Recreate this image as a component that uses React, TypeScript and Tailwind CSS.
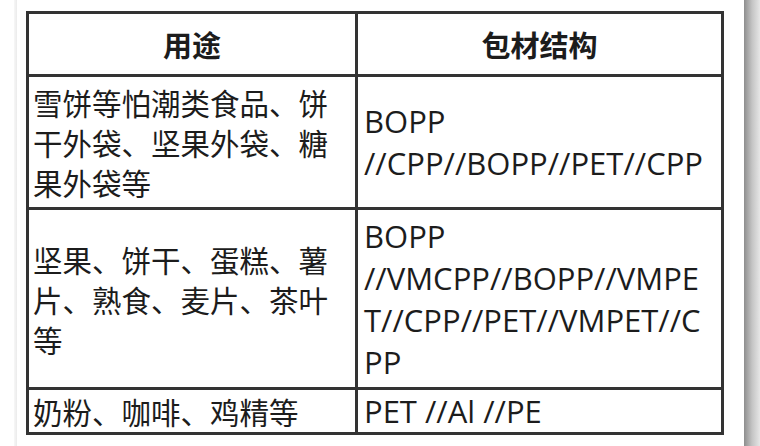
const cjk = "font-['Noto_Sans_CJK_SC','Noto_Sans',sans-serif]";
const latin = "font-['Open_Sans','Noto_Sans_CJK_SC',sans-serif]";

const rows = [
  {
    use: ["雪饼等怕潮类食品、饼", "干外袋、坚果外袋、糖", "果外袋等"],
    pack: ["BOPP", "//CPP//BOPP//PET//CPP"],
    h: "h-[133px]",
  },
  {
    use: ["坚果、饼干、蛋糕、薯", "片、熟食、麦片、茶叶", "等"],
    pack: ["BOPP", "//VMCPP//BOPP//VMPE", "T//CPP//PET//VMPET//C", "PP"],
    h: "h-[180px]",
  },
  {
    use: ["奶粉、咖啡、鸡精等"],
    pack: ["PET //Al //PE"],
    h: "h-[45px]",
  },
];

export default function App() {
  return (
    <div className="flex h-[446px] w-[760px] overflow-hidden bg-white text-[#1c1c1c]">
      {/* faint page edge on the left */}
      <div className="flex h-full w-[26px] shrink-0 pl-[14px]">
        <div className="h-full w-[3px] bg-gradient-to-r from-[#f7f7f7] to-[#ebebeb]" />
      </div>

      <div className="w-[698px] shrink-0 pt-[11px]">
        <table className="w-[698px] table-fixed border-collapse">
          <colgroup>
            <col className="w-[329px]" />
            <col className="w-[366px]" />
          </colgroup>
          <thead>
            <tr className="h-[63px]">
              <th className={`border-[3px] border-[#333] text-center text-[29px] font-bold leading-none ${cjk}`}>
                用途
              </th>
              <th className={`border-[3px] border-[#333] text-center text-[29px] font-bold leading-none ${cjk}`}>
                包材结构
              </th>
            </tr>
          </thead>
          <tbody>
            {rows.map((r, i) => (
              <tr key={i} className={r.h}>
                <td className={`border-[3px] border-[#333] pl-[4px] align-middle text-[29.5px] leading-[40px] ${cjk}`}>
                  {r.use.map((line, j) => (
                    <div key={j} className="whitespace-nowrap">
                      {line}
                    </div>
                  ))}
                </td>
                <td className={`border-[3px] border-[#333] pl-[6px] align-middle text-[31px] leading-[42px] ${latin}`}>
                  {r.pack.map((line, j) => (
                    <div key={j} className="whitespace-nowrap">
                      {line}
                    </div>
                  ))}
                </td>
              </tr>
            ))}
          </tbody>
        </table>
      </div>

      <div className="w-[20px] shrink-0" />
      {/* shadow of the next page on the right */}
      <div className="h-full w-[16px] shrink-0 bg-gradient-to-r from-[#8e8e8e] via-[#c4c4c4] to-[#e6e6e6]" />
    </div>
  );
}
